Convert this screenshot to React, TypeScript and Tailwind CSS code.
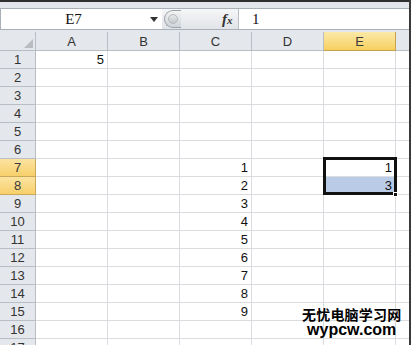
import React from "react";

const COLS = ["A", "B", "C", "D", "E", "F"];
const ROWS = Array.from({ length: 17 }, (_, i) => i + 1);

const data: Record<string, string> = {
  A1: "5",
  C7: "1",
  C8: "2",
  C9: "3",
  C10: "4",
  C11: "5",
  C12: "6",
  C13: "7",
  C14: "8",
  C15: "9",
  E7: "1",
  E8: "3",
};

function FormulaBar() {
  return (
    <div className="h-[30px] bg-[#e3e6ea] pt-[6px]">
      <div className="flex h-[22px] border-y border-l border-[#a9b0b8] bg-white">
        <div className="relative w-[161px] bg-white">
          <div className="absolute left-0 top-0 w-[145px] h-full flex items-center justify-center font-['Liberation_Serif'] text-[15px] text-[#111]">
            E7
          </div>
          <svg className="absolute left-[149px] top-[8px]" width="8" height="5" viewBox="0 0 8 5">
            <polygon points="0,0 8,0 4,5" fill="#333" />
          </svg>
        </div>
        <div className="relative w-[77px] bg-gradient-to-b from-[#f5f6f7] to-[#e1e4e8] border-r border-[#b8bec6] flex items-center">
          <div className="ml-[2px] w-[17px] h-[18px] rounded-l-full border border-r-0 border-[#9da3aa] bg-gradient-to-b from-[#f4f4f4] to-[#cfd3d8] flex items-center pl-[3px]">
            <div className="w-[10px] h-[10px] rounded-full bg-gradient-to-b from-[#e8e8e8] to-[#c4c8cc] border border-[#b5b9be]" />
          </div>
          <div className="absolute left-[60px] top-[1px] font-['Liberation_Serif'] italic font-bold text-[15px] text-[#333] leading-[18px]">
            f<span className="text-[11px]">x</span>
          </div>
        </div>
        <div className="flex-1 bg-white pl-[13px] flex items-center font-['Liberation_Serif'] text-[15px] text-[#111]">
          1
        </div>
      </div>
    </div>
  );
}

function HeaderRow() {
  return (
    <div className="flex h-[19px]">
      <div className="relative w-[36px] shrink-0 bg-[#e4e7eb] border-r border-b border-[#b9bec5]">
        <svg className="absolute left-[24px] top-[7px]" width="9" height="9" viewBox="0 0 9 9">
          <polygon points="9,0 9,9 0,9" fill="#b9bcc0" />
        </svg>
      </div>
      {COLS.map((c) => {
        const sel = c === "E";
        return (
          <div
            key={c}
            className={
              "w-[72px] shrink-0 border-r border-b flex items-center justify-center text-[13px] leading-none " +
              (sel
                ? "bg-gradient-to-b from-[#fbe9a8] to-[#f7cf5c] border-[#c2a24e] text-[#3a3a3a]"
                : "bg-[#e4e7eb] border-[#b9bec5] text-[#333]")
            }
          >
            {c === "F" ? "" : c}
          </div>
        );
      })}
    </div>
  );
}

function Row({ r }: { r: number }) {
  const sel = r === 7 || r === 8;
  return (
    <div className="flex h-[18px]">
      <div
        className={
          "w-[36px] shrink-0 border-r border-b flex items-center justify-center text-[13px] leading-none " +
          (sel
            ? "bg-gradient-to-b from-[#fbe3a0] to-[#f8d06a] border-[#c9a957] text-[#3a3a3a]"
            : "bg-[#e4e7eb] border-[#b9bec5] text-[#333]")
        }
      >
        {r}
      </div>
      {COLS.map((c) => {
        const key = c + r;
        const v = data[key];
        const blue = key === "E8";
        return (
          <div
            key={key}
            className={
              "w-[72px] shrink-0 border-r border-b border-[#dadcdf] flex items-center justify-end pr-[3px] text-[13px] leading-none text-[#111] " +
              (blue ? "bg-[#b9cbe6]" : "bg-white")
            }
          >
            {v ?? ""}
          </div>
        );
      })}
    </div>
  );
}

export default function App() {
  return (
    <div className="w-[414px] h-[345px] overflow-hidden bg-white flex font-['Liberation_Sans',sans-serif]">
      <div className="relative w-[409px] h-full overflow-hidden">
        <div className="h-[2px] bg-[#2f2f2f]" />
        <FormulaBar />
        <div className="w-[476px]">
          <HeaderRow />
          {ROWS.map((r) => (
            <Row key={r} r={r} />
          ))}
        </div>
        {/* selection box */}
        <div className="absolute left-[323px] top-[157px] w-[74px] h-[38px] border-[3px] border-[#111]" />
        <div className="absolute left-[393px] top-[192px] w-[5px] h-[5px] bg-[#111] border border-white" />
        {/* watermark */}
        <div className="absolute left-[302px] top-[306px] flex flex-col items-center text-black font-bold">
          <div className="font-['Noto_Sans_CJK_SC',sans-serif] text-[14px] tracking-[0.2px] leading-[16px] h-[16px]">
            无忧电脑学习网
          </div>
          <div className="font-['Liberation_Sans',sans-serif] text-[16px] leading-[15px] h-[15px]">wypcw.com</div>
        </div>
      </div>
      <div className="w-[2px] h-full bg-[#3a3a3a]" />
      <div className="flex-1 h-full bg-white" />
    </div>
  );
}
